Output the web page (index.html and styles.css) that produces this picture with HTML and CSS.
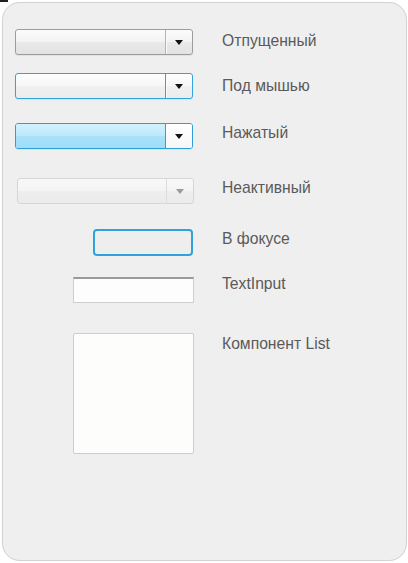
FILE: index.html
```html
<!DOCTYPE html>
<html lang="ru">
<head>
<meta charset="utf-8">
<title>Состояния компонентов</title>
<link rel="stylesheet" href="styles.css">
</head>
<body>
<div class="mark"></div>
<div class="panel">
  <div class="row r1">
    <div class="cell"><div class="combo"><div class="field"></div><div class="btn"><span class="arrow"></span></div></div></div>
    <div class="label l1">Отпущенный</div>
  </div>
  <div class="row r2">
    <div class="cell"><div class="combo hover"><div class="field"></div><div class="btn"><span class="arrow"></span></div></div></div>
    <div class="label l2">Под мышью</div>
  </div>
  <div class="row r3">
    <div class="cell"><div class="combo pressed"><div class="field"></div><div class="btn"><span class="arrow"></span></div></div></div>
    <div class="label l3">Нажатый</div>
  </div>
  <div class="row r4">
    <div class="cell"><div class="combo disabled"><div class="field"></div><div class="btn"><span class="arrow"></span></div></div></div>
    <div class="label l4">Неактивный</div>
  </div>
  <div class="row r5">
    <div class="cell"><div class="focusbox"></div></div>
    <div class="label l5">В фокусе</div>
  </div>
  <div class="row r6">
    <div class="cell"><div class="textinput"></div></div>
    <div class="label l6">TextInput</div>
  </div>
  <div class="row r7">
    <div class="cell"><div class="list"></div></div>
    <div class="label l7">Компонент List</div>
  </div>
</div>
</body>
</html>
```

FILE: styles.css
```css
html, body {
  margin: 0;
  padding: 0;
  background: #ffffff;
}
body {
  width: 408px;
  height: 563px;
  position: relative;
  font-family: "Liberation Sans", Arial, sans-serif;
}
.mark {
  position: absolute;
  left: 0;
  top: 0;
  width: 8px;
  height: 2px;
  background: #222;
}
.panel {
  box-sizing: border-box;
  margin: 2px 0 0 2px;
  width: 405px;
  height: 559px;
  border: 1px solid #d3d3d3;
  border-radius: 18px;
  background: #efefef;
  box-shadow: 0 0 1px rgba(0,0,0,0.08);
  padding-top: 26px;
  display: flex;
  flex-direction: column;
}
.row {
  display: flex;
  align-items: flex-start;
}
.cell {
  width: 190px;
  display: flex;
  justify-content: flex-end;
  flex: none;
}
.label {
  margin-left: 29px;
  font-size: 15.7px;
  line-height: 17px;
  color: #5a5a5a;
  white-space: nowrap;
}
.r2 { margin-top: 18px; }
.r3 { margin-top: 24px; }
.r4 { margin-top: 29px; }
.r5 { margin-top: 25px; }
.r6 { margin-top: 21px; }
.r7 { margin-top: 30px; }
.l1 { margin-top: 3px; }
.l2 { margin-top: 4px; }
.l3 { margin-top: 1px; }
.l4 { margin-top: 1px; }
.l5 { margin-top: 1px; }
.l6 { margin-top: -2px; }
.l7 { margin-top: 2px; }

.combo {
  box-sizing: border-box;
  width: 178px;
  height: 26px;
  display: flex;
  border: 1px solid #9c9c9c;
  border-radius: 3px;
  overflow: hidden;
  background: linear-gradient(#fbfbfb, #f3f3f3 48%, #e9e9e9 52%, #e3e3e3);
  box-shadow: 0 1px 1px rgba(0,0,0,0.06);
}
.field {
  flex: 1;
}
.btn {
  width: 26px;
  flex: none;
  border-left: 1px solid #b3b3b3;
  box-shadow: inset 1px 0 0 #fafafa;
  display: flex;
  align-items: center;
  justify-content: center;
}
.arrow {
  width: 0;
  height: 0;
  border-left: 4px solid transparent;
  border-right: 4px solid transparent;
  border-top: 5px solid #111;
}
.combo.hover {
  border-color: #33a3dc;
  background: linear-gradient(#fdfdfd, #f7f7f7 48%, #f0f0f0 52%, #ececec);
}
.combo.hover .btn {
  border-left-color: #33a3dc;
}
.combo.pressed {
  border-color: #2d9fd9;
  background: #ffffff;
}
.combo.pressed .field {
  background: linear-gradient(#d3f1fd, #bde9fb 48%, #a9e2f9 52%, #9edcf6);
}
.combo.pressed .btn {
  border-left-color: #2d9fd9;
  background: linear-gradient(#ffffff, #f6f6f6);
  box-shadow: none;
}
.combo.disabled {
  width: 177px;
  margin-right: -1px;
  border-color: #d6d6d6;
  background: linear-gradient(#f8f8f8, #f4f4f4 48%, #eeeeee 52%, #ebebeb);
  box-shadow: none;
}
.combo.disabled .btn {
  border-left-color: #dcdcdc;
  box-shadow: none;
}
.combo.disabled .arrow {
  border-top-color: #9a9a9a;
}

.focusbox {
  box-sizing: border-box;
  width: 100px;
  height: 27px;
  border: 2px solid #2fa2dc;
  border-radius: 4px;
  background: #eeeeee;
}
.textinput {
  box-sizing: border-box;
  width: 121px;
  height: 26px;
  margin-right: -1px;
  background: #fdfdfd;
  border: 1px solid #cfcfcf;
  border-top: 2px solid #9a9a9a;
}
.list {
  box-sizing: border-box;
  width: 121px;
  height: 121px;
  margin-right: -1px;
  background: #fdfdfc;
  border: 1px solid #cdcdcd;
  border-radius: 2px;
}
```
